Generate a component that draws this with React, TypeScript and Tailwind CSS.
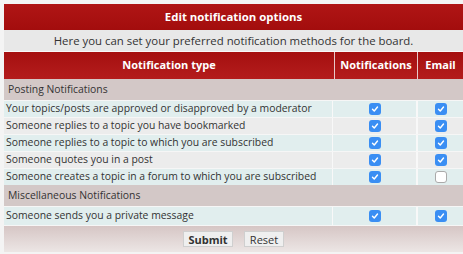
import { Fragment } from "react";

type Row = { label: string; notify: boolean; email: boolean };
type Section = { title: string; rows: Row[] };

const sections: Section[] = [
  {
    title: "Posting Notifications",
    rows: [
      { label: "Your topics/posts are approved or disapproved by a moderator", notify: true, email: true },
      { label: "Someone replies to a topic you have bookmarked", notify: true, email: true },
      { label: "Someone replies to a topic to which you are subscribed", notify: true, email: true },
      { label: "Someone quotes you in a post", notify: true, email: true },
      { label: "Someone creates a topic in a forum to which you are subscribed", notify: true, email: false },
    ],
  },
  {
    title: "Miscellaneous Notifications",
    rows: [{ label: "Someone sends you a private message", notify: true, email: true }],
  },
];

function Check({ on }: { on: boolean }) {
  return on ? (
    <span className="mx-auto flex h-[12px] w-[12px] items-center justify-center rounded-[3px] bg-[#3a8ef3]">
      <svg viewBox="0 0 12 12" className="h-[10px] w-[10px]">
        <path d="M3 6.3 L5.1 8.4 L9 3.6" fill="none" stroke="#fff" strokeWidth="1.7" strokeLinecap="round" strokeLinejoin="round" />
      </svg>
    </span>
  ) : (
    <span className="mx-auto block h-[12px] w-[12px] rounded-[3px] border border-[#aaa] bg-white" />
  );
}

export default function App() {
  return (
    <div className="h-[254px] w-[463px] whitespace-nowrap bg-[#f4f4f4] pl-[4px] pt-[4px] text-[10.4px] text-[#333]" style={{ fontFamily: '"Open Sans", "DejaVu Sans", sans-serif' }}>
      <div className="w-[459px]">
        <div className="flex h-[26px] items-center justify-center bg-gradient-to-b from-[#b01515] to-[#a30d0d] text-[11.4px] font-bold text-white">
          Edit notification options
        </div>
        <div className="flex h-[22px] items-center justify-center border-b border-[#f8f8f8] bg-[#e8e8e8] text-[11.4px]">
          Here you can set your preferred notification methods for the board.
        </div>
        <div className="flex h-[27px] bg-gradient-to-b from-[#a50f0f] to-[#b41c1c] text-[11px] font-bold text-white">
          <div className="flex w-[330px] items-center justify-center">Notification type</div>
          <div className="flex w-[83px] items-center justify-center border-l border-[#e8c8c8]">Notifications</div>
          <div className="flex flex-1 items-center justify-center border-l border-[#e8c8c8]">Email</div>
        </div>
        {sections.map((s) => (
          <Fragment key={s.title}>
            <div className="flex h-[21px] items-center bg-[#d3c8c7] pl-[4px]">{s.title}</div>
            {s.rows.map((r, i) => (
              <div
                key={r.label}
                className={`flex border-t border-[#f6f6f6] ${s.rows.length === 1 ? "h-[19px]" : "h-[17px]"} ${i % 2 === 0 ? "bg-[#e1eeee]" : "bg-[#ececec]"}`}
              >
                <div className="flex w-[328px] items-center pl-[2px]">{r.label}</div>
                <div className="flex w-[85px] items-center border-x border-[#f8f8f8]">
                  <Check on={r.notify} />
                </div>
                <div className="flex flex-1 items-center border-l border-[#f8f8f8]">
                  <Check on={r.email} />
                </div>
              </div>
            ))}
          </Fragment>
        ))}
        <div className="flex h-[27px] items-center justify-center gap-[11px] border-t border-[#f6f6f6] bg-gradient-to-b from-[#d6c6c5] to-[#ece6e5] text-[11px]">
          <button className="h-[16px] w-[50px] border border-[#cfcfcf] bg-[#efefef] font-bold leading-none text-[#333]">Submit</button>
          <button className="h-[16px] w-[40px] border border-[#cfcfcf] bg-[#efefef] leading-none text-[#333]">Reset</button>
        </div>
      </div>
    </div>
  );
}
